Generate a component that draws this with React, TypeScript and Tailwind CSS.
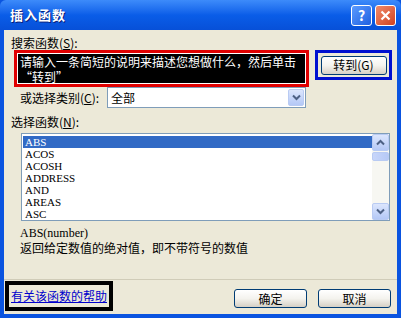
import React from 'react';

const font = { fontFamily: '"Noto Sans CJK SC", "Liberation Sans", sans-serif' };
const listFont = { fontFamily: '"Liberation Serif", "Noto Sans CJK SC", serif' };

const functions = ['ABS', 'ACOS', 'ACOSH', 'ADDRESS', 'AND', 'AREAS', 'ASC'];

// small XP style chevron
const Chevron = ({ up = false }: { up?: boolean }) => (
  <svg width="9" height="7" viewBox="0 0 9 7" className={up ? 'rotate-180' : ''}>
    <path d="M1 1.5 L4.5 5 L8 1.5" fill="none" stroke="#4D6185" strokeWidth="2" />
  </svg>
);

const XpButton = ({ children, className = '' }: { children: React.ReactNode; className?: string }) => (
  <div
    className={`flex items-center justify-center rounded-[3px] border border-[#003C74] bg-gradient-to-b from-white via-[#F4F3EE] to-[#D6D0C5] text-[12px] leading-none text-black ${className}`}
  >
    {children}
  </div>
);

export default function App() {
  return (
    <div className="w-[401px] h-[318px] overflow-hidden bg-[#0A54E0] flex flex-col" style={font}>
      {/* Title bar */}
      <div className="h-[30px] shrink-0 rounded-t-[6px] bg-gradient-to-b from-[#3D8BFA] via-[#0A5DE8] to-[#0750D8] flex items-center pl-[10px] pr-[5px]">
        <span className="text-white text-[13px] font-bold tracking-[1px] [text-shadow:1px_1px_0_#0A1F7A]">插入函数</span>
        <div className="ml-auto flex gap-[3px]">
          <div className="w-[21px] h-[21px] rounded-[3px] border border-white bg-gradient-to-br from-[#5B9BFF] to-[#1F5FE0] flex items-center justify-center text-white text-[14px] font-bold leading-none">?</div>
          <div className="w-[21px] h-[21px] rounded-[3px] border border-white bg-gradient-to-br from-[#F08A6A] to-[#D0401C] flex items-center justify-center">
            <svg width="11" height="11" viewBox="0 0 11 11">
              <path d="M1.5 1.5 L9.5 9.5 M9.5 1.5 L1.5 9.5" stroke="white" strokeWidth="2.2" />
            </svg>
          </div>
        </div>
      </div>

      {/* Body */}
      <div className="mx-[4px] h-[284px] shrink-0 bg-[#ECE9D8] flex flex-col text-[12px] text-black">
        <div className="pl-[7px] pt-[5px] h-[20px] leading-[15px]">
          搜索函数(<span className="underline">S</span>):
        </div>

        <div className="flex items-start">
          <div className="ml-[10px] w-[295px] h-[37px] border-[3px] border-[#E00000] bg-white p-[1px]">
            <div className="h-full bg-black text-white text-[12px] leading-[15px] px-[2px]">
              <div>请输入一条简短的说明来描述您想做什么，然后单击</div>
              <div>“转到”</div>
            </div>
          </div>
          <div className="ml-[6px] w-[77px] h-[30px] border-[3px] border-[#0010D0] flex items-center justify-center">
            <XpButton className="w-[66px] h-[19px]">转到(G)</XpButton>
          </div>
        </div>

        <div className="flex items-center h-[21px]">
          <span className="pl-[16px] w-[103px]">
            或选择类别(<span className="underline">C</span>):
          </span>
          <div className="w-[199px] h-[21px] border border-[#7F9DB9] bg-white flex items-center">
            <span className="pl-[3px]">全部</span>
            <div className="ml-auto mr-[1px] w-[16px] h-[17px] rounded-[2px] bg-gradient-to-b from-[#DCE6FD] to-[#B4C8F6] border border-[#B9CBF3] flex items-center justify-center">
              <Chevron />
            </div>
          </div>
        </div>

        <div className="pl-[7px] mt-[6px] h-[19px] leading-[15px]">
          选择函数(<span className="underline">N</span>):
        </div>

        <div className="ml-[17px] w-[369px] h-[88px] border border-[#7F9DB9] bg-white flex">
          <div className="flex-1 pt-[2px] pl-[1px] text-[11px] leading-[12px]" style={listFont}>
            {functions.map((f, i) => (
              <div key={f} className={`h-[12px] pl-[2px] ${i === 0 ? 'bg-[#316AC5] text-white' : ''}`}>
                {f}
              </div>
            ))}
          </div>
          <div className="w-[17px] bg-[#F7F7F2] flex flex-col">
            <div className="h-[17px] rounded-[2px] bg-gradient-to-b from-[#DCE6FD] to-[#B4C8F6] border border-[#B9CBF3] flex items-center justify-center">
              <Chevron up />
            </div>
            <div className="h-[9px] mt-[1px] rounded-[2px] bg-gradient-to-r from-[#C8D6FA] to-[#B6C9F6] border border-[#B9CBF3]" />
            <div className="flex-1" />
            <div className="h-[17px] rounded-[2px] bg-gradient-to-b from-[#DCE6FD] to-[#B4C8F6] border border-[#B9CBF3] flex items-center justify-center">
              <Chevron />
            </div>
          </div>
        </div>

        <div className="pl-[16px] mt-[5px] h-[14px] leading-[14px]" style={listFont}>
          ABS(number)
        </div>
        <div className="pl-[16px] h-[15px] leading-[15px]">
          返回给定数值的绝对值，即不带符号的数值
        </div>

        <div className="mt-[24px] h-[2px] border-t border-[#D0CCB8] border-b-white" />

        <div className="flex items-start">
          <div className="ml-[1px] w-[108px] h-[30px] border-[4px] border-black bg-[#ECE9D8] flex items-center pl-[2px]">
            <span className="text-[#0000CC] underline">有关该函数的帮助</span>
          </div>
          <XpButton className="ml-[121px] mt-[8px] w-[73px] h-[19px]">确定</XpButton>
          <XpButton className="ml-[11px] mt-[8px] w-[73px] h-[19px]">取消</XpButton>
        </div>
      </div>
    </div>
  );
}
